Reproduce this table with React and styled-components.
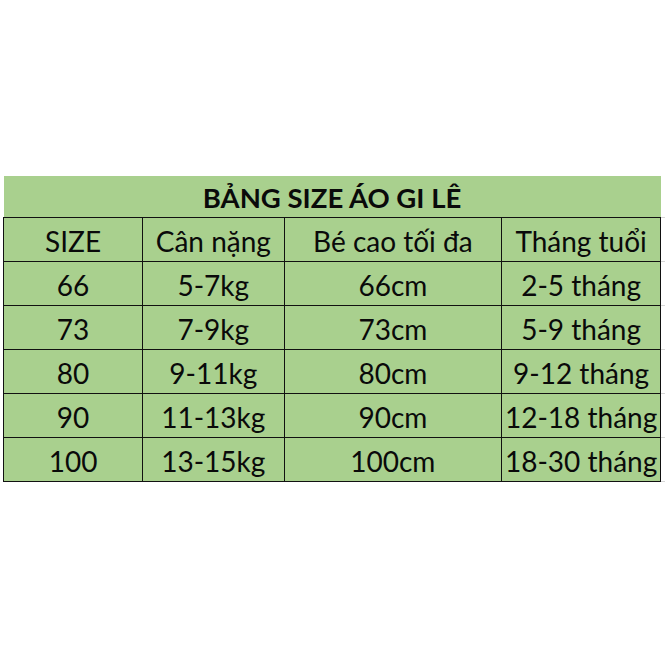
import React from 'react'
import styled, {createGlobalStyle} from 'styled-components'

const GlobalStyle = createGlobalStyle`
  html, body {
    margin: 0;
    padding: 0;
    background: #ffffff;
  }
`

const Page = styled.div`
  width: 665px;
  height: 665px;
  padding-top: 176px;
  padding-left: 3px;
  box-sizing: border-box;
  font-family: Lato, 'Noto Sans', sans-serif;
  color: #0a0a0a;
`

const Table = styled.table`
  border-collapse: collapse;
  table-layout: fixed;
`

const TitleCell = styled.th`
  height: 39px;
  padding: 2px 0 0;
  line-height: 1;
  background: #a9d08e;
  border-bottom: 1px solid #111;
  font-size: 27.5px;
  font-weight: 700;
  text-align: center;
`

const Cell = styled.td`
  width: ${(p) => p.$w}px;
  height: 40px;
  padding: 3px 0 0;
  line-height: 1;
  background: #a9d08e;
  border: 1px solid #111;
  font-size: 28px;
  font-weight: 400;
  text-align: center;
  white-space: nowrap;
  overflow: visible;
`

const Gutter = styled.td`
  width: 4px;
  padding: 0;
  border-top: 1px solid #d6d6d6;
  border-bottom: 1px solid #d6d6d6;
  border-left: 1px solid #111;
`

const widths = [140, 141, 218, 158]

const header = ['SIZE', 'Cân nặng', 'Bé cao tối đa', 'Tháng tuổi']

const rows = [
  ['66', '5-7kg', '66cm', '2-5 tháng'],
  ['73', '7-9kg', '73cm', '5-9 tháng'],
  ['80', '9-11kg', '80cm', '9-12 tháng'],
  ['90', '11-13kg', '90cm', '12-18 tháng'],
  ['100', '13-15kg', '100cm', '18-30 tháng'],
]

export default function App() {
  return (
    <>
      <GlobalStyle />
      <Page>
        <Table>
          <tbody>
            <tr>
              <TitleCell colSpan={4}>BẢNG SIZE ÁO GI LÊ</TitleCell>
            </tr>
            {[header, ...rows].map((row, i) => (
              <tr key={i}>
                {row.map((text, j) => (
                  <Cell key={j} $w={widths[j]}>
                    {text}
                  </Cell>
                ))}
                <Gutter />
              </tr>
            ))}
          </tbody>
        </Table>
      </Page>
    </>
  )
}
